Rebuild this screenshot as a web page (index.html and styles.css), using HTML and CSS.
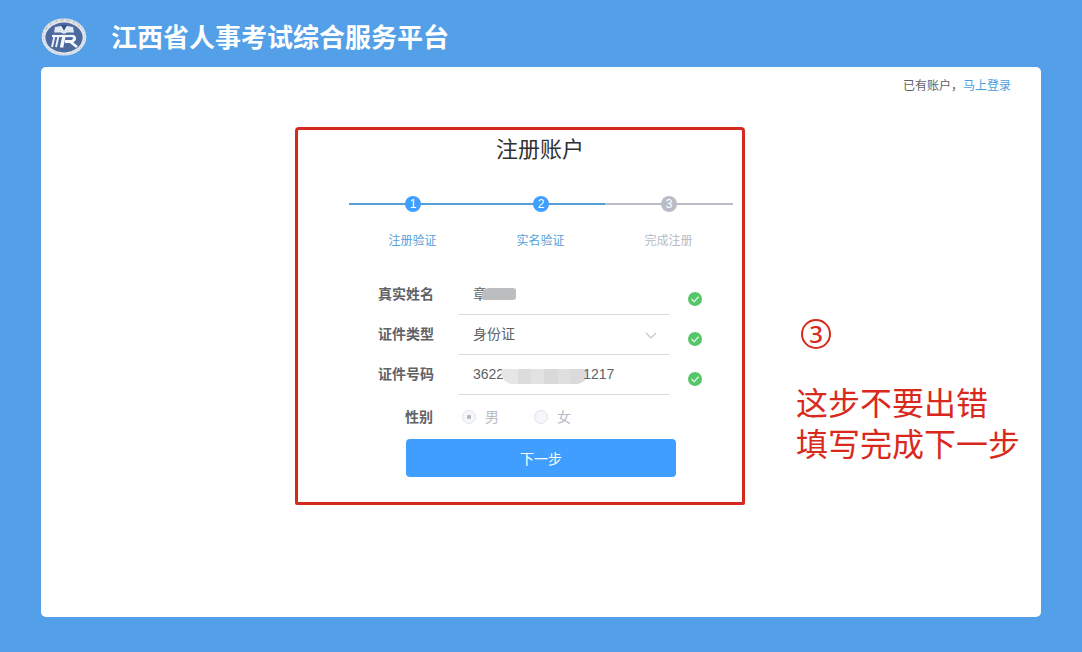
FILE: index.html
```html
<!DOCTYPE html>
<html lang="zh-CN">
<head>
  <meta charset="UTF-8">
  <title>江西省人事考试综合服务平台</title>
  <link rel="stylesheet" href="styles.css">
</head>
<body>

  <header class="header">
    <svg class="logo" viewBox="0 0 46 38">
      <ellipse cx="23" cy="19" rx="22.3" ry="18.6" fill="#dfe5ee"/>
      <ellipse cx="23" cy="19" rx="20.8" ry="17.1" fill="none" stroke="#bcc7d6" stroke-width="1" stroke-dasharray="1.5 2"/>
      <path d="M5 11 A20.5 17 0 0 1 41 11" fill="none" stroke="#cfc09c" stroke-width="1.6" stroke-dasharray="2 4"/>
      <ellipse cx="23" cy="19.5" rx="18.6" ry="15" fill="#4d6a9e"/>
      <path d="M14 9 L20 8 L23 10 L26 8 L32 9 L33 14.5 L26 14.5 L23 16 L20 14.5 L13 14.5 Z" fill="#dfe8f3"/>
      <path d="M21 7 L23 11 L25 7" fill="none" stroke="#29477d" stroke-width="1.6"/>
      <path d="M11 18 H33" stroke="#f4f7fb" stroke-width="2.2"/>
      <path d="M13.5 18 L11 29 M17.5 18 L15 29" stroke="#f4f7fb" stroke-width="1.8"/>
      <path d="M23 18 L20.5 29.5" stroke="#f4f7fb" stroke-width="3.4"/>
      <path d="M32 18 Q36 20.5 31 23.5 H24 M29 23.5 L36 29" fill="none" stroke="#f4f7fb" stroke-width="2.8"/>
    </svg>
    <h1>江西省人事考试综合服务平台</h1>
  </header>

  <div class="card">
    <div class="login-tip">已有账户，<a href="#">马上登录</a></div>

    <div class="register">
      <h2>注册账户</h2>

      <div class="steps">
        <div class="step active">
          <div class="step-line"><span class="step-num">1</span></div>
          <div class="step-title">注册验证</div>
        </div>
        <div class="step active">
          <div class="step-line"><span class="step-num">2</span></div>
          <div class="step-title">实名验证</div>
        </div>
        <div class="step">
          <div class="step-line"><span class="step-num">3</span></div>
          <div class="step-title">完成注册</div>
        </div>
      </div>

      <div class="form">
        <div class="row">
          <label>真实姓名</label>
          <div class="field">章<span class="mask mask-name"></span></div>
          <svg class="check" viewBox="0 0 14 14"><circle cx="7" cy="7" r="7" fill="#55c76a"/><path d="M3.6 7.2 L6.2 9.6 L10.6 4.8" fill="none" stroke="#e4f8df" stroke-width="1.3"/></svg>
        </div>
        <div class="row">
          <label>证件类型</label>
          <div class="field select">身份证
            <svg class="arrow" viewBox="0 0 12 7"><path d="M1 1 L6 6 L11 1" fill="none" stroke="#c0c4cc" stroke-width="1.2"/></svg>
          </div>
          <svg class="check" viewBox="0 0 14 14"><circle cx="7" cy="7" r="7" fill="#55c76a"/><path d="M3.6 7.2 L6.2 9.6 L10.6 4.8" fill="none" stroke="#e4f8df" stroke-width="1.3"/></svg>
        </div>
        <div class="row">
          <label>证件号码</label>
          <div class="field">3622<span class="mask mask-id"></span>1217</div>
          <svg class="check" viewBox="0 0 14 14"><circle cx="7" cy="7" r="7" fill="#55c76a"/><path d="M3.6 7.2 L6.2 9.6 L10.6 4.8" fill="none" stroke="#e4f8df" stroke-width="1.3"/></svg>
        </div>
        <div class="row row-sex">
          <label>性别</label>
          <div class="radios">
            <span class="radio"><i class="dot checked"></i>男</span>
            <span class="radio"><i class="dot"></i>女</span>
          </div>
        </div>
        <button class="next">下一步</button>
      </div>
    </div>
  </div>

  <!-- 标注 -->
  <div class="mark-box"></div>
  <div class="mark-num"><span>3</span></div>
  <div class="mark-text">这步不要出错<br>填写完成下一步</div>

</body>
</html>
```

FILE: styles.css
```css
* {
  box-sizing: border-box;
}

body {
  margin: 0;
  height: 652px;
  position: relative;
  overflow: hidden;
  background: #539fe8;
  font-family: "Liberation Sans", "Noto Sans CJK SC", sans-serif;
  font-size: 14px;
  color: #606266;
}

.header {
  height: 67px;
  padding: 4px 0 0 41px;
  display: flex;
  align-items: flex-start;
}

.logo {
  width: 46px;
  height: 38px;
  margin-top: 14px;
}

h1 {
  margin: 14px 0 0 24px;
  font-size: 26px;
  line-height: 40px;
  font-weight: bold;
  color: #fff;
}

.card {
  width: 1000px;
  height: 550px;
  margin: 0 auto;
  background: #fff;
  border-radius: 5px;
}

.login-tip {
  padding: 9px 30px 0 0;
  font-size: 12px;
  line-height: 20px;
  text-align: right;
}

.login-tip a {
  color: #4a9edb;
  text-decoration: none;
}

.register {
  width: 384px;
  margin: 0 auto;
  padding-top: 39px;
}

h2 {
  margin: 0 2px 0 0;
  font-size: 22px;
  line-height: 30px;
  font-weight: normal;
  text-align: center;
  color: #303133;
}

.steps {
  display: flex;
  margin-top: 31px;
}

.step {
  flex: 1;
  text-align: center;
  font-size: 12px;
  color: #b6bac4;
}

.step-line {
  height: 16px;
  display: flex;
  justify-content: center;
  background: linear-gradient(#babdc6, #babdc6) 0 7px / 100% 2px no-repeat;
}

.step-num {
  width: 16px;
  height: 16px;
  line-height: 16px;
  border-radius: 50%;
  background: #babdc6;
  color: #fff;
}

.step-title {
  margin: 19px 1px 0 0;
  line-height: 20px;
}

.active {
  color: #559fdc;
}

.active .step-line {
  background-image: linear-gradient(#559fd5, #559fd5);
}

.active .step-num {
  background: #409eff;
}

.form {
  padding-top: 24px;
}

.row {
  display: flex;
  height: 40px;
}

.row label {
  width: 85px;
  margin-right: 25px;
  line-height: 38px;
  font-weight: bold;
  text-align: right;
}

.field {
  width: 210px;
  padding: 0 12px 1px 14px;
  display: flex;
  align-items: center;
  line-height: 38px;
  border-bottom: 1px solid #d6d8dc;
}

.select {
  justify-content: space-between;
}

.arrow {
  width: 12px;
  height: 7px;
  margin-top: 2px;
}

.check {
  width: 14px;
  height: 14px;
  margin: 17px 0 0 19px;
}

.mask-name {
  width: 34px;
  height: 12px;
  margin-left: -5px;
  border-radius: 7px 3px 3px 2px;
  background: #bbbdbf;
}

.mask-id {
  width: 86px;
  height: 15px;
  margin: 4px -4px 0 -3px;
  border-radius: 3px 2px 10px 12px;
  background: linear-gradient(90deg, #e6e6e7 20%, #dcdcdd 20% 35%, #e2e2e3 35% 50%, #d9d9da 50% 66%, #dfdfe0 66% 80%, #dadadb 80%);
}

.row-sex {
  height: 44px;
}

.row-sex label {
  width: 84px;
  margin-right: 26px;
  line-height: 44px;
}

.radios {
  display: flex;
  gap: 35px;
  padding-left: 3px;
}

.radio {
  display: flex;
  align-items: center;
  gap: 9px;
  line-height: 42px;
  color: #b9bcc4;
}

.dot {
  width: 14px;
  height: 14px;
  border: 1px solid #e0e3ea;
  border-radius: 50%;
  background: #f5f7fa;
}

.checked {
  background: radial-gradient(circle, #b4b8c0 0 2px, #f5f7fa 2.5px);
}

.next {
  display: block;
  width: 270px;
  height: 38px;
  margin-left: 57px;
  padding: 0;
  border: none;
  border-radius: 4px;
  background: #409eff;
  color: #fff;
  font-family: inherit;
  font-size: 14px;
}

.mark-box {
  position: absolute;
  left: 295px;
  top: 127px;
  width: 450px;
  height: 378px;
  border: 3px solid #d5281e;
  border-radius: 4px 4px 2px 2px;
}

.mark-num {
  position: absolute;
  left: 801px;
  top: 319px;
  width: 30px;
  height: 30px;
  border: 2px solid #d9291c;
  border-radius: 50%;
  color: #d9291c;
  font-family: "Noto Sans", sans-serif;
  font-size: 24px;
  font-weight: 500;
  line-height: 25px;
  text-align: center;
}

.mark-text {
  position: absolute;
  left: 796px;
  top: 384px;
  color: #d9291c;
  font-size: 32px;
  line-height: 41px;
  white-space: nowrap;
}
```
